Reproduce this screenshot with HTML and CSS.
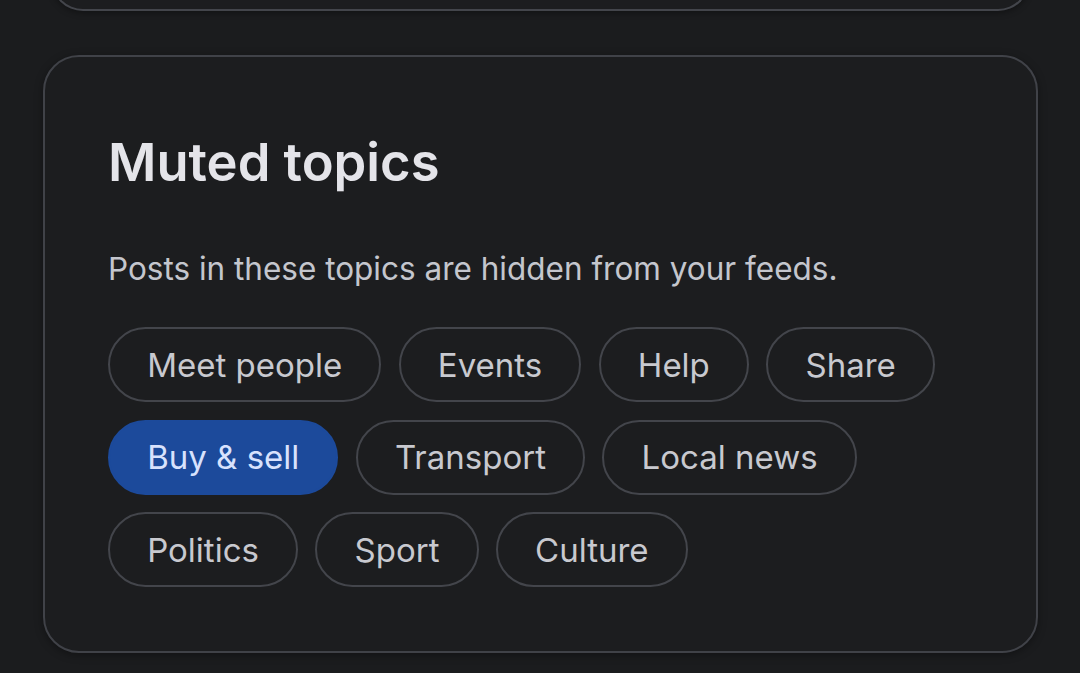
FILE: index.html
```html
<!DOCTYPE html>
<html lang="en">
<head>
<meta charset="utf-8">
<title>Muted topics</title>
<link rel="stylesheet" href="styles.css">
</head>
<body>
<div class="prev-card"></div>
<section class="card">
  <h1 class="title">Muted topics</h1>
  <p class="subtitle">Posts in these topics are hidden from your feeds.</p>
  <div class="chips">
    <span class="chip">Meet people</span>
    <span class="chip">Events</span>
    <span class="chip">Help</span>
    <span class="chip">Share</span>
    <span class="chip chip-selected">Buy &amp; sell</span>
    <span class="chip">Transport</span>
    <span class="chip">Local news</span>
    <span class="chip">Politics</span>
    <span class="chip">Sport</span>
    <span class="chip">Culture</span>
  </div>
</section>
</body>
</html>
```
FILE: styles.css
```css
html, body {
  margin: 0;
  padding: 0;
  background: #1b1c1e;
  font-family: Inter, "Noto Sans", sans-serif;
  overflow: hidden;
}
body {
  width: 1080px;
  height: 673px;
}
.prev-card {
  box-sizing: border-box;
  height: 61px;
  margin: -50px 50px 0 51px;
  border: 2px solid #43454b;
  border-top: none;
  border-radius: 0 0 32px 32px;
  background: #1c1d1f;
  box-shadow: 0 2px 6px rgba(0, 0, 0, 0.35);
}
.card {
  box-sizing: border-box;
  width: 995px;
  margin: 44px 0 0 43px;
  padding: 74px 63px 64px 63px;
  border: 2px solid #404248;
  border-radius: 36px;
  background: #1c1d1f;
  box-shadow: 0 2px 8px rgba(0, 0, 0, 0.35);
}
.title {
  margin: 0;
  font-size: 52.5px;
  line-height: 62px;
  font-weight: 600;
  color: #e4e4e9;
}
.subtitle {
  margin: 56px 0 0 0;
  font-size: 31.5px;
  line-height: 40px;
  font-weight: 400;
  color: #c4c6cd;
}
.chips {
  margin-top: 38px;
  display: flex;
  flex-wrap: wrap;
  gap: 17.5px 17.25px;
}
.chip {
  box-sizing: border-box;
  height: 75px;
  padding: 0 37.2px;
  display: inline-flex;
  align-items: center;
  border: 2px solid #43454b;
  border-radius: 38px;
  font-size: 33px;
  color: #c8c9cf;
  white-space: nowrap;
}
.chip-selected {
  background: #1c4a9b;
  border-color: #1c4a9b;
  color: #d8e2fd;
}
```
